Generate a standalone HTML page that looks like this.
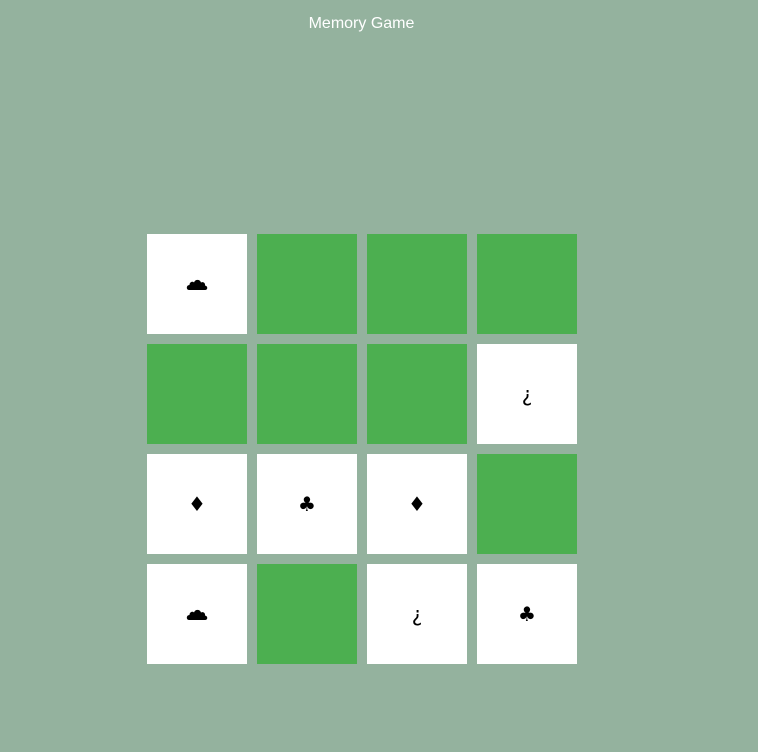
<!DOCTYPE html>
<html><head><meta charset="utf-8"><style>
body{margin:0;width:758px;height:752px;background:#94b29e;font-family:"Liberation Sans","DejaVu Sans",sans-serif;position:relative;overflow:hidden}
h1{position:absolute;top:14px;left:0;width:723px;text-align:center;margin:0;font-size:16px;font-weight:normal;color:#fff;line-height:20px}
.c{position:absolute;width:100px;height:100px;display:flex;align-items:center;justify-content:center;font-size:20px;color:#000;font-family:"DejaVu Sans","Liberation Sans",sans-serif}
.w{background:#fff}.g{background:#4caf50}
</style></head><body>
<h1>Memory Game</h1>
<div class="c w" style="left:147px;top:234px"><svg width="22" height="14" viewBox="0 0 22 14"><path d="M3 13 C0 13 0 8 3.5 8 C3.5 5 6.5 4 8 5.5 C9 2 14 2 15 5.5 C17 4.5 19.5 6 19 8.5 C22 9 22 13 19 13 Z" fill="#000"/></svg></div>
<div class="c g" style="left:257px;top:234px"></div>
<div class="c g" style="left:367px;top:234px"></div>
<div class="c g" style="left:477px;top:234px"></div>
<div class="c g" style="left:147px;top:344px"></div>
<div class="c g" style="left:257px;top:344px"></div>
<div class="c g" style="left:367px;top:344px"></div>
<div class="c w" style="left:477px;top:344px">¿</div>
<div class="c w" style="left:147px;top:454px">♦</div>
<div class="c w" style="left:257px;top:454px">♣</div>
<div class="c w" style="left:367px;top:454px">♦</div>
<div class="c g" style="left:477px;top:454px"></div>
<div class="c w" style="left:147px;top:564px"><svg width="22" height="14" viewBox="0 0 22 14"><path d="M3 13 C0 13 0 8 3.5 8 C3.5 5 6.5 4 8 5.5 C9 2 14 2 15 5.5 C17 4.5 19.5 6 19 8.5 C22 9 22 13 19 13 Z" fill="#000"/></svg></div>
<div class="c g" style="left:257px;top:564px"></div>
<div class="c w" style="left:367px;top:564px">¿</div>
<div class="c w" style="left:477px;top:564px">♣</div>
</body></html>
